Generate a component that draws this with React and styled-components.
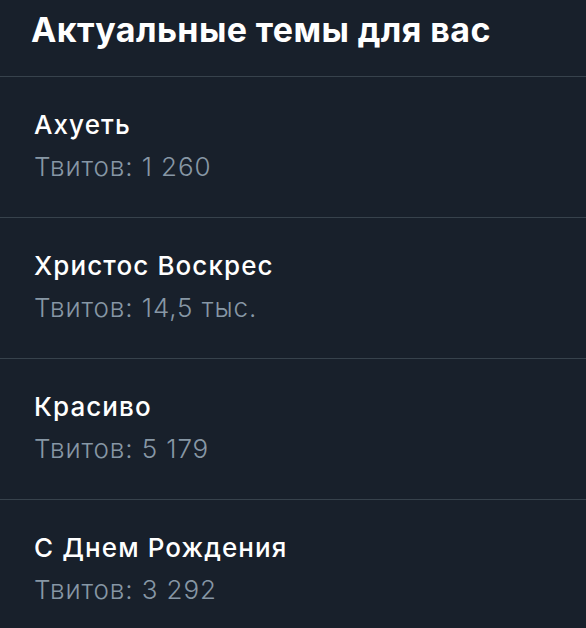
import React from "react";
import styled, { createGlobalStyle } from "styled-components";

const Global = createGlobalStyle`
  html, body { margin: 0; padding: 0; background: #18202b; }
  body { font-family: Inter, "Noto Sans", sans-serif; -webkit-font-smoothing: antialiased; }
`;

const Panel = styled.div`
  width: 586px;
  height: 628px;
  background: #18202b;
  overflow: hidden;
`;

const Header = styled.div`
  height: 77px;
  box-sizing: border-box;
  padding: 8px 0 0 31px;
  border-bottom: 1px solid #37424c;
`;

const Title = styled.h1`
  margin: 0;
  font-size: 34px;
  font-weight: 700;
  color: #ffffff;
  letter-spacing: 0.4px;
  line-height: 44px;
`;

const Row = styled.div`
  height: 141px;
  box-sizing: border-box;
  padding: 31px 0 0 34px;
  border-bottom: 1px solid #37424c;
  &:last-child { border-bottom: none; }
`;

const Name = styled.div`
  font-size: 26px;
  font-weight: 500;
  color: #ffffff;
  line-height: 34px;
  letter-spacing: 1.1px;
`;

const Count = styled.div`
  margin-top: 8px;
  font-size: 26px;
  font-weight: 300;
  color: #8797a5;
  line-height: 34px;
  letter-spacing: 0.9px;
`;

const trends = [
  { name: "Ахуеть", count: "Твитов: 1 260" },
  { name: "Христос Воскрес", count: "Твитов: 14,5 тыс." },
  { name: "Красиво", count: "Твитов: 5 179" },
  { name: "С Днем Рождения", count: "Твитов: 3 292" },
];

export default function App() {
  return (
    <Panel>
      <Global />
      <Header>
        <Title>Актуальные темы для вас</Title>
      </Header>
      {trends.map((t) => (
        <Row key={t.name}>
          <Name>{t.name}</Name>
          <Count>{t.count}</Count>
        </Row>
      ))}
    </Panel>
  );
}
